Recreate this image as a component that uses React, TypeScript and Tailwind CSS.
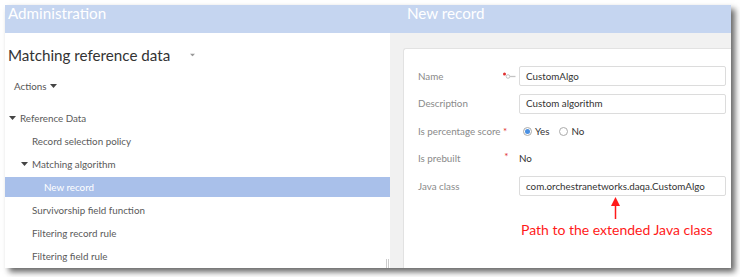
import React from 'react'

const font = { fontFamily: 'Lato, "Noto Sans", sans-serif' }

function Caret({ className = '' }: { className?: string }) {
  return (
    <svg width="7" height="4" viewBox="0 0 7 4" className={className}>
      <path d="M0 0 L7 0 L3.5 4 Z" fill="currentColor" />
    </svg>
  )
}

function TreeRow({ label, indent, open, selected }: { label: string; indent: number; open?: boolean; selected?: boolean }) {
  return (
    <div className={`h-5 flex items-center text-[9.8px] ${selected ? 'bg-[#a9c0ea] text-white' : 'text-[#5a5a5a]'}`} style={{ paddingLeft: indent }}>
      {open && <Caret className="mr-[4px] text-[#444] -ml-[11px]" />}
      <span>{label}</span>
    </div>
  )
}

function KeyMark() {
  return (
    <svg width="14" height="8" viewBox="0 0 14 8" className="-ml-[2px]">
      <circle cx="2.5" cy="2" r="1.5" fill="#e03030" />
      <circle cx="6" cy="4.5" r="1.8" fill="none" stroke="#c4c4c4" strokeWidth="1" />
      <path d="M7.8 4.5 H13.5" stroke="#c4c4c4" strokeWidth="1.3" />
    </svg>
  )
}

function Field({ label, mark, children }: { label: React.ReactNode; mark?: React.ReactNode; children: React.ReactNode }) {
  return (
    <div className="flex items-center h-[20px]">
      <div className="w-[82px] text-[9.8px] text-[#8a8a8a] whitespace-nowrap">{label}</div>
      <div className="w-[19px] flex items-center justify-center">{mark}</div>
      <div className="flex-1">{children}</div>
    </div>
  )
}

function Input({ value }: { value: string }) {
  return (
    <div className="h-[20px] w-[207px] border border-[#dcdcdc] rounded-[2px] bg-white flex items-center px-[6px] text-[9.8px] text-[#333] whitespace-nowrap">
      {value}
    </div>
  )
}

export default function App() {
  return (
    <div className="w-[740px] h-[277px] bg-white overflow-hidden" style={font}>
      <div className="ml-[5px] mt-[5px] w-[726px] h-[263px] flex flex-col bg-white shadow-[4px_4px_6px_rgba(0,0,0,0.6)] overflow-hidden">
        {/* Header */}
        <div className="h-[28px] flex bg-[#c5d5f0] text-white text-[15.2px] shrink-0">
          <div className="w-[385px] pl-[3px] leading-[17px]">Administration</div>
          <div className="pl-[17px] leading-[17px]">New record</div>
        </div>
        <div className="flex flex-1 min-h-0">
          {/* Left panel */}
          <div className="w-[385px] flex flex-col relative">
            <div className="flex items-center h-[22px] mt-[11px] pl-[3px] text-[15.2px] text-[#333]">
              <span>Matching reference data</span>
              <Caret className="ml-[19px] text-[#999] scale-75" />
            </div>
            <div className="flex items-center h-[16px] mt-[12px] pl-[9px] text-[9.8px] text-[#555]">
              <span>Actions</span>
              <Caret className="ml-[4px] text-[#444]" />
            </div>
            <div className="flex flex-col gap-[3px] mt-[14px]">
              <TreeRow label="Reference Data" indent={15} open />
              <TreeRow label="Record selection policy" indent={27} />
              <TreeRow label="Matching algorithm" indent={27} open />
              <TreeRow label="New record" indent={39} selected />
              <TreeRow label="Survivorship field function" indent={27} />
              <TreeRow label="Filtering record rule" indent={27} />
              <TreeRow label="Filtering field rule" indent={27} />
            </div>
            <div className="absolute right-0 bottom-0 h-[9px] w-[4px] flex gap-[1px]">
              <div className="w-[1px] bg-[#ccc]" />
              <div className="w-[1px] bg-[#ccc]" />
            </div>
          </div>
          {/* Right panel */}
          <div className="flex-1 bg-[#f1f1f1] pl-[13px] pt-[15px]">
            <div className="h-full bg-white border-l border-t border-[#e2e2e2] rounded-tl-[3px] pl-[14px] pt-[17px]">
              <div className="flex flex-col gap-[7.5px]">
                <Field label="Name" mark={<KeyMark />}>
                  <Input value="CustomAlgo" />
                </Field>
                <Field label="Description">
                  <Input value="Custom algorithm" />
                </Field>
                <Field label={<span>Is percentage score <span className="text-[#e03030]">*</span></span>}>
                  <div className="flex items-center gap-[10px] text-[9.8px] text-[#333] pl-[4px]">
                    <span className="flex items-center gap-[3px]">
                      <span className="w-[9px] h-[9px] rounded-full border border-[#aaa] flex items-center justify-center">
                        <span className="w-[5px] h-[5px] rounded-full bg-[#4a90e2]" />
                      </span>
                      Yes
                    </span>
                    <span className="flex items-center gap-[3px]">
                      <span className="w-[9px] h-[9px] rounded-full border border-[#aaa]" />
                      No
                    </span>
                  </div>
                </Field>
                <Field label="Is prebuilt" mark={<span className="text-[#e03030] text-[10px] -mt-[4px] -ml-[6px]">*</span>}>
                  <div className="text-[9.8px] text-[#333]">No</div>
                </Field>
                <Field label="Java class">
                  <Input value="com.orchestranetworks.daqa.CustomAlgo" />
                </Field>
              </div>
              <div className="flex flex-col items-start pl-[101px] mt-[1px]">
                <svg width="9" height="22" viewBox="0 0 9 22" className="ml-[92px]">
                  <path d="M4.5 0 L9 9 L0 9 Z" fill="#ff1a1a" />
                  <path d="M4.5 8 V22" stroke="#ff1a1a" strokeWidth="1.5" />
                </svg>
                <div className="text-[14px] text-[#ff1a1a] leading-[18px] mt-[2px] ml-[2px] whitespace-nowrap">Path to the extended Java class</div>
              </div>
            </div>
          </div>
        </div>
      </div>
    </div>
  )
}
